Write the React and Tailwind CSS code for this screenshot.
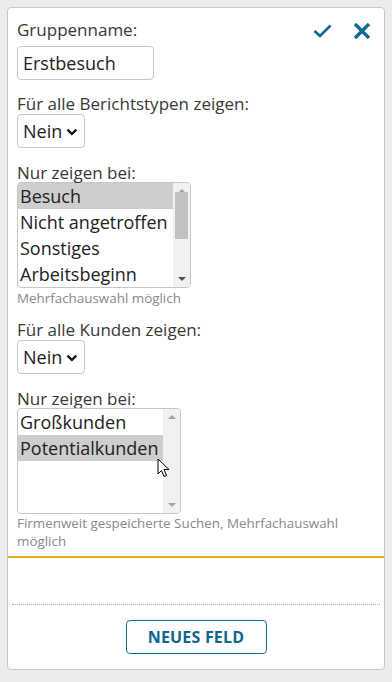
const FONT = { fontFamily: '"Open Sans", "Liberation Sans", sans-serif' };

function Label({ children, className = "" }) {
  return (
    <div className={`text-[17px] leading-[20px] text-[#383838] ${className}`}>
      {children}
    </div>
  );
}

function Hint({ children, className = "" }) {
  return (
    <div className={`text-[13.4px] leading-[18px] text-[#888] ${className}`}>
      {children}
    </div>
  );
}

function FakeSelect() {
  return (
    <div className="flex items-center w-[68px] h-[34px] border border-[#c6c6c6] rounded-[4px] pl-[5px] pr-[6px] bg-white">
      <span className="text-[18px] leading-none text-[#222]">Nein</span>
      <svg width="12" height="8" viewBox="0 0 12 8" className="ml-[4px] mt-[2px]">
        <path d="M1.5 1.5 L6 6 L10.5 1.5" fill="none" stroke="#111" strokeWidth="2.4" />
      </svg>
    </div>
  );
}

function ListBox({ width, items, selected, thumb }) {
  return (
    <div
      className="flex h-[106px] border border-[#c6c6c6] rounded-[4px] overflow-hidden bg-white"
      style={{ width }}
    >
      <div className="flex-1 flex flex-col">
        {items.map((it) => (
          <div
            key={it}
            className={`h-[26px] pl-[2px] text-[18px] leading-[26px] text-[#222] whitespace-nowrap ${
              it === selected ? "bg-[#cecece]" : ""
            }`}
          >
            {it}
          </div>
        ))}
      </div>
      <div className="w-[17px] bg-[#f1f1f1] flex flex-col items-center justify-between py-[6px]">
        <svg width="8" height="4" viewBox="0 0 8 4">
          <path d="M0 4 L4 0 L8 4 Z" fill="#a3a3a3" />
        </svg>
        {thumb && <div className="w-[13px] h-[47px] bg-[#c1c1c1] -mt-[1px] mb-auto" />}
        <svg width="8" height="4" viewBox="0 0 8 4">
          <path d="M0 0 L8 0 L4 4 Z" fill={thumb ? "#505050" : "#a3a3a3"} />
        </svg>
      </div>
    </div>
  );
}

export default function App() {
  return (
    <div className="min-h-[682px] bg-[#ececec] p-[7px] pb-[12px]" style={FONT}>
      <div className="bg-white border border-[#c8c8c8] rounded-[4px] relative">
        {/* save / cancel */}
        <div className="absolute right-[13px] top-[15px] flex items-center gap-[21px]">
          <svg width="19" height="14" viewBox="0 0 19 14">
            <path
              d="M1.5 7 L7 12 L17.5 1.5"
              fill="none"
              stroke="#0e6a94"
              strokeWidth="2.7"
            />
          </svg>
          <svg width="18" height="16" viewBox="0 0 18 16">
            <path
              d="M2 1 L16 15 M16 1 L2 15"
              fill="none"
              stroke="#0e6a94"
              strokeWidth="3.4"
            />
          </svg>
        </div>

        <div className="px-[9px] pt-[12px] pb-[6px]">
          <Label className="mb-[6px]">Gruppenname:</Label>
          <div className="w-[137px] h-[34px] border border-[#c6c6c6] rounded-[4px] px-[5px] flex items-center text-[18px] text-[#222]">
            Erstbesuch
          </div>

          <Label className="mt-[14px]">Für alle Berichtstypen zeigen:</Label>
          <FakeSelect />

          <Label className="mt-[15px] mb-[-1px]">Nur zeigen bei:</Label>
          <ListBox
            width={174}
            items={["Besuch", "Nicht angetroffen", "Sonstiges", "Arbeitsbeginn"]}
            selected="Besuch"
            thumb
          />
          <Hint className="mt-[1px]">Mehrfachauswahl möglich</Hint>

          <Label className="mt-[13px]">Für alle Kunden zeigen:</Label>
          <FakeSelect />

          <Label className="mt-[15px] mb-[-1px]">Nur zeigen bei:</Label>
          <div className="relative w-fit">
            <ListBox
              width={164}
              items={["Großkunden", "Potentialkunden"]}
              selected="Potentialkunden"
            />
            <svg
              width="13"
              height="20"
              viewBox="0 0 13 20"
              className="absolute left-[140px] top-[50px]"
            >
              <path
                d="M1 1 L1 16 L4.5 12.5 L7 18.5 L9.5 17.5 L7 11.5 L12 11.5 Z"
                fill="#fff"
                stroke="#000"
                strokeWidth="1"
                strokeLinejoin="round"
              />
            </svg>
          </div>
          <Hint>Firmenweit gespeicherte Suchen, Mehrfachauswahl möglich</Hint>
        </div>
        <div className="h-[2px] bg-[#e8ad1c]" />

        <div className="h-[46px]" />
        <div className="mx-[4px] border-t border-dotted border-[#b0b0b0]" />
        <div className="flex justify-center pt-[15px] pb-[15px]">
          <button
            type="button"
            className="w-[141px] h-[34px] border border-[#1a6a8f] rounded-[4px] text-[16px] font-bold text-[#0e668d] tracking-[0.2px]"
          >
            NEUES FELD
          </button>
        </div>
      </div>
    </div>
  );
}
